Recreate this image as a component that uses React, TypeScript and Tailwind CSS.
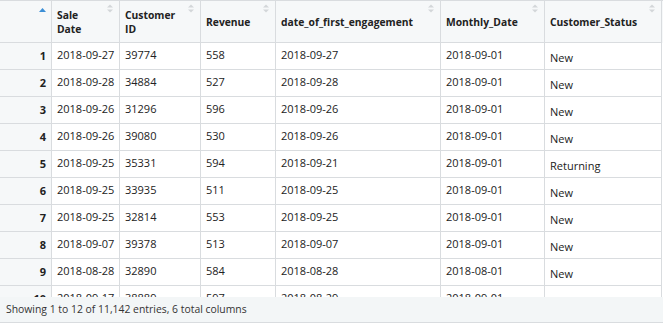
import React from "react";

const rows: string[][] = [
  ["1", "2018-09-27", "39774", "558", "2018-09-27", "2018-09-01", "New"],
  ["2", "2018-09-28", "34884", "527", "2018-09-28", "2018-09-01", "New"],
  ["3", "2018-09-26", "31296", "596", "2018-09-26", "2018-09-01", "New"],
  ["4", "2018-09-26", "39080", "530", "2018-09-26", "2018-09-01", "New"],
  ["5", "2018-09-25", "35331", "594", "2018-09-21", "2018-09-01", "Returning"],
  ["6", "2018-09-25", "33935", "511", "2018-09-25", "2018-09-01", "New"],
  ["7", "2018-09-25", "32814", "553", "2018-09-25", "2018-09-01", "New"],
  ["8", "2018-09-07", "39378", "513", "2018-09-07", "2018-09-01", "New"],
  ["9", "2018-08-28", "32890", "584", "2018-08-28", "2018-08-01", "New"],
  ["10", "2018-09-17", "38889", "597", "2018-08-29", "2018-09-01", "Returning"],
  ["11", "2018-09-14", "36501", "542", "2018-09-14", "2018-09-01", "New"],
  ["12", "2018-09-12", "37220", "575", "2018-09-12", "2018-09-01", "New"],
];

const headers: React.ReactNode[] = [
  <>Sale<br />Date</>,
  <>Customer<br />ID</>,
  "Revenue",
  "date_of_first_engagement",
  "Monthly_Date",
  "Customer_Status",
];

const cols = "grid grid-cols-[52px_68px_81px_75px_165px_104px_117px]";

function SortIcon() {
  return (
    <svg width="6" height="9" viewBox="0 0 6 9" className="absolute right-[6px] top-[3px]">
      <path d="M0 3.5 L3 0.5 L6 3.5 Z" fill="#d3d6d9" />
      <path d="M0 5.5 L3 8.5 L6 5.5 Z" fill="#d3d6d9" />
    </svg>
  );
}

export default function App() {
  return (
    <div
      className="w-[663px] h-[323px] bg-white overflow-hidden text-[#333] text-[11px]"
      style={{ fontFamily: '"Open Sans", "Noto Sans", sans-serif' }}
    >
      <div className="h-[297px] overflow-hidden">
        <div className={`${cols} h-[43px] border-t border-[#d9dcdf] bg-[#f6f8f9]`}>
          <div className="relative border-r border-b border-[#d9dcdf]">
            <svg width="7" height="4" viewBox="0 0 7 4" className="absolute left-[39px] top-[7px]">
              <path d="M0 4 L3.5 0 L7 4 Z" fill="#3c8fd6" />
            </svg>
          </div>
          {headers.map((h, i) => (
            <div
              key={i}
              className="relative flex items-center pl-[5px] pr-[14px] font-bold text-[10.3px] leading-[14px] border-r border-b border-[#d9dcdf] text-[#222]"
            >
              <span>{h}</span>
              <SortIcon />
            </div>
          ))}
        </div>
        {rows.map((r) => (
          <div key={r[0]} className={`${cols} h-[27px]`}>
            <div className="flex items-center justify-end pr-[5px] font-bold bg-[#f6f8f9] border-r border-b border-[#d9dcdf] text-[#222]">
              {r[0]}
            </div>
            {r.slice(1).map((c, j) => (
              <div
                key={j}
                className={`flex items-center pl-[5px] border-r border-b border-[#d9dcdf] whitespace-nowrap ${
                  j === 5 ? "pt-[4px]" : "pb-[1px]"
                } text-[#222]`}
              >
                {c}
              </div>
            ))}
          </div>
        ))}
      </div>
      <div className="h-[26px] bg-[#f3f6f7] border-b border-[#d9dcdf] flex items-center pl-[6px] text-[10.4px] text-[#333]">
        Showing 1 to 12 of 11,142 entries, 6 total columns
      </div>
    </div>
  );
}
